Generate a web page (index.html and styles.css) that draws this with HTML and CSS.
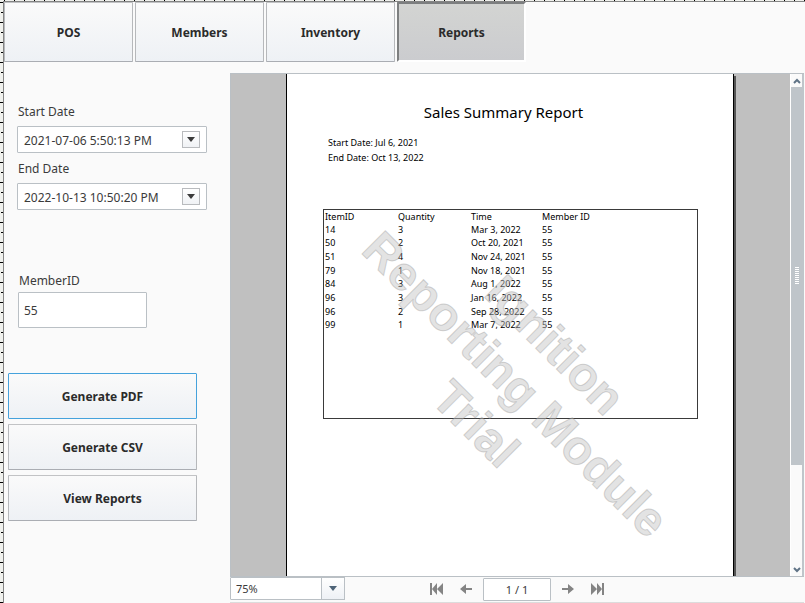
FILE: index.html
```html
<!DOCTYPE html>
<html lang="en">
<head>
<meta charset="utf-8">
<title>Reports</title>
<link rel="stylesheet" href="styles.css">
</head>
<body>
<div class="app">
  <nav class="tabs">
    <button class="btn tab" type="button">POS</button>
    <button class="btn tab" type="button">Members</button>
    <button class="btn tab" type="button">Inventory</button>
    <button class="btn tab tab-active" type="button" aria-current="page">Reports</button>
  </nav>
  <div class="content">
    <form class="sidebar">
      <div class="fields">
        <label for="start">Start Date</label>
        <div class="date">
          <input id="start" type="text" value="2021-07-06 5:50:13 PM">
          <button type="button" aria-label="Pick start date"><svg viewBox="0 0 10 6"><path d="M0 0H10L5 6Z"/></svg></button>
        </div>
        <label for="end">End Date</label>
        <div class="date">
          <input id="end" type="text" value="2022-10-13 10:50:20 PM">
          <button type="button" aria-label="Pick end date"><svg viewBox="0 0 10 6"><path d="M0 0H10L5 6Z"/></svg></button>
        </div>
      </div>
      <div class="member">
        <label for="member">MemberID</label>
        <input id="member" type="text" value="55">
      </div>
      <div class="actions">
        <button class="btn btn-focus" type="button">Generate PDF</button>
        <button class="btn" type="button">Generate CSV</button>
        <button class="btn" type="button">View Reports</button>
      </div>
    </form>
    <main class="viewer">
      <div class="stage">
        <div class="canvas">
          <article class="page">
            <h1>Sales Summary Report</h1>
            <div class="range">
              <p>Start Date: Jul 6, 2021</p>
              <p>End Date: Oct 13, 2022</p>
            </div>
            <div class="frame">
              <table>
                <thead><tr><th class="c-item">ItemID</th><th class="c-qty">Quantity</th><th class="c-time">Time</th><th>Member ID</th></tr></thead>
                <tbody>
                  <tr><td>14</td><td>3</td><td>Mar 3, 2022</td><td>55</td></tr>
                  <tr><td>50</td><td>2</td><td>Oct 20, 2021</td><td>55</td></tr>
                  <tr><td>51</td><td>4</td><td>Nov 24, 2021</td><td>55</td></tr>
                  <tr><td>79</td><td>1</td><td>Nov 18, 2021</td><td>55</td></tr>
                  <tr><td>84</td><td>3</td><td>Aug 1, 2022</td><td>55</td></tr>
                  <tr><td>96</td><td>3</td><td>Jan 16, 2022</td><td>55</td></tr>
                  <tr><td>96</td><td>2</td><td>Sep 28, 2022</td><td>55</td></tr>
                  <tr><td>99</td><td>1</td><td>Mar 7, 2022</td><td>55</td></tr>
                </tbody>
              </table>
            </div>
            <svg class="watermark" viewBox="0 0 446 502">
              <g transform="translate(217 322) rotate(45)">
                <text x="0" y="-56">Ignition</text>
                <text x="0" y="0">Reporting Module</text>
                <text x="0" y="56">Trial</text>
              </g>
            </svg>
          </article>
        </div>
        <div class="scroll">
          <button type="button" aria-label="Scroll up"><svg viewBox="0 0 8 6"><path d="M1 5L4 2L7 5"/></svg></button>
          <div class="thumb"><span class="grip"></span></div>
          <div class="track"></div>
          <button type="button" aria-label="Scroll down"><svg viewBox="0 0 8 6"><path d="M1 1L4 4L7 1"/></svg></button>
        </div>
      </div>
      <div class="toolbar">
        <div class="zoom">
          <input type="text" value="75%" aria-label="Zoom">
          <button type="button" aria-label="Zoom levels"><svg viewBox="0 0 8 5"><path d="M0 0H8L4 5Z"/></svg></button>
        </div>
        <div class="pager">
          <button type="button" aria-label="First page"><svg viewBox="0 0 13 12"><path d="M0 0H2V12H0ZM7 0V12L2 6ZM13 0V12L7 6Z"/></svg></button>
          <button type="button" aria-label="Previous page"><svg viewBox="0 0 13 12"><path d="M0 6L6 1V5H12V7H6V11Z"/></svg></button>
          <input type="text" value="1 / 1" aria-label="Page">
          <button type="button" aria-label="Next page"><svg viewBox="0 0 13 12"><path d="M13 6L7 1V5H1V7H7V11Z"/></svg></button>
          <button type="button" aria-label="Last page"><svg viewBox="0 0 13 12"><path d="M11 0H13V12H11ZM6 0V12L11 6ZM0 0V12L6 6Z"/></svg></button>
        </div>
      </div>
    </main>
  </div>
</div>
</body>
</html>
```
FILE: styles.css
```css
* { box-sizing: border-box; }

html, body { height: 100%; }

body {
  margin: 0;
  padding: 1px 0 0 3px;
  background-color: #f0f1ed;
  background-image:
    repeating-linear-gradient(90deg, #000 0 1px, transparent 1px 10px),
    repeating-linear-gradient(180deg, #000 0 1px, transparent 1px 20px),
    repeating-linear-gradient(180deg, #000 0 1px, transparent 1px 20px);
  background-position: 4px 0, 0 2px, 1px 12px;
  background-size: 100% 1px, 3px 100%, 2px 100%;
  background-repeat: no-repeat;
  font: 12px/20px "Noto Sans", sans-serif;
  color: #3b3b3b;
  overflow: hidden;
}

button, input { font: inherit; color: inherit; margin: 0; padding: 0; }
button { display: flex; align-items: center; justify-content: center; border: 0; background: none; }
input { min-width: 0; border: 1px solid #bac0c5; border-radius: 1px; background: #fff; }
svg { display: block; }

.app {
  display: flex;
  flex-direction: column;
  height: 100%;
  border: solid #848484;
  border-width: 1px 0 0 1px;
  background: #fafafa;
}

.btn {
  padding-top: 2px;
  border: 1px solid;
  border-color: #c2c3c5 #b6b8bb #aaadb3;
  border-radius: 1px;
  background: linear-gradient(#fafafa, #eef1f5);
  color: #2b2b2b;
  font-weight: 700;
}

.tabs { display: flex; gap: 2px; }
.tab { width: 129px; height: 60px; }
.tab-active {
  border: 2px solid;
  border-color: #7d7f80 #fff #fff #7d7f80;
  background: linear-gradient(#d3d4d2, #cbcccf);
}

.content { display: flex; flex: 1; min-height: 0; }

.sidebar {
  display: flex;
  flex-direction: column;
  flex: none;
  width: 226px;
  padding: 40px 0 0 4px;
}
.fields { display: grid; grid-template-columns: minmax(0, 1fr); width: 190px; margin-left: 9px; }
.fields label, .member label { margin: 0 1px; }
.fields label { height: 24px; }
.date {
  display: flex;
  align-items: center;
  height: 27px;
  margin-bottom: 6px;
  padding: 0 6px;
  border: 1px solid #bac0c5;
  border-radius: 1px;
  background: #fff;
}
.date input { flex: 1; padding-top: 2px; border: 0; }
.date button { width: 18px; height: 17px; border: 1px solid #b9bbbe; background: linear-gradient(#fff, #f0f2f5); }
.date svg { width: 8px; height: 5px; fill: #3b3b3b; }
.member { display: grid; gap: 1px; grid-template-columns: minmax(0, 1fr); width: 129px; margin: 55px 0 0 10px; }
.member input { height: 36px; padding: 0 5px; }
.actions { display: grid; gap: 5px; width: 189px; margin-top: 45px; }
.actions .btn { height: 46px; }
.actions .btn-focus { border-color: #45a2dc; }

.viewer {
  display: flex;
  flex-direction: column;
  flex: 1;
  min-width: 0;
  margin: 11px 1px 0 0;
}
.stage {
  display: flex;
  flex: 1;
  min-height: 0;
  border: 1px solid #bac0c5;
  border-width: 1px 0 1px 1px;
}
.canvas { flex: 1; min-width: 0; padding: 0 56px 0 55px; background: #c0c0c0; overflow: hidden; }
.page {
  position: relative;
  height: 100%;
  padding: 0 35px 0 36px;
  border: solid #000;
  border-width: 0 1px;
  background: #fff;
  box-shadow: 2px 2px 0 #555;
  color: #000;
  font-size: 9px;
  line-height: 15px;
}
.page h1 { margin: 0; padding: 27px 14px 12px 0; text-align: center; font-size: 15px; font-weight: 400; line-height: 22px; }
.range { margin-left: 5px; }
.range p { margin: 0; }
.frame { height: 210px; margin-top: 44px; padding-top: 1px; border: 1px solid #3a3a3a; }
.frame table { width: 100%; height: 121px; border-collapse: collapse; table-layout: fixed; line-height: 12px; }
.frame th, .frame td { padding: 0 1px; text-align: left; font-weight: 400; }
.c-item { width: 73px; }
.c-qty { width: 73px; }
.c-time { width: 71px; }
.watermark { position: absolute; inset: 0 auto auto 0; width: 446px; height: 502px; }
.watermark text {
  font: 700 48px "Liberation Sans", sans-serif;
  text-anchor: middle;
  fill: rgba(192, 192, 192, 0.45);
  stroke: rgba(150, 150, 150, 0.4);
  stroke-width: 1px;
}

.scroll {
  display: flex;
  flex-direction: column;
  width: 14px;
  border: solid #fff;
  border-width: 0 0 0 1px;
  border-right: 2px solid #bfc5ca;
  background: #fafafa;
}
.scroll button { height: 13px; }
.scroll svg { width: 8px; height: 6px; fill: none; stroke: #5f7386; stroke-width: 2px; }
.thumb { display: flex; align-items: center; justify-content: center; flex: 377; background: #bfc5ca; }
.grip { width: 4px; height: 17px; background: repeating-linear-gradient(#fff 0 1px, transparent 1px 2px); }
.track { flex: 98; }

.toolbar { display: flex; height: 26px; padding-bottom: 1px; border-bottom: 1px solid #dcdcdc; }
.zoom { display: flex; width: 115px; height: 23px; font-size: 11px; }
.zoom input { flex: 1; padding: 0 5px; }
.zoom button { width: 24px; margin-left: -1px; border: 1px solid #bac0c5; background: linear-gradient(#fff, #eef1f5); }
.zoom svg { width: 8px; height: 5px; fill: #4e6478; }
.pager { display: flex; align-items: center; margin-left: 76px; font-size: 11px; }
.pager button { width: 30px; height: 22px; }
.pager svg { width: 13px; height: 12px; fill: #848484; }
.pager input { width: 68px; height: 23px; margin: 0 1px 0 2px; text-align: center; }
```
